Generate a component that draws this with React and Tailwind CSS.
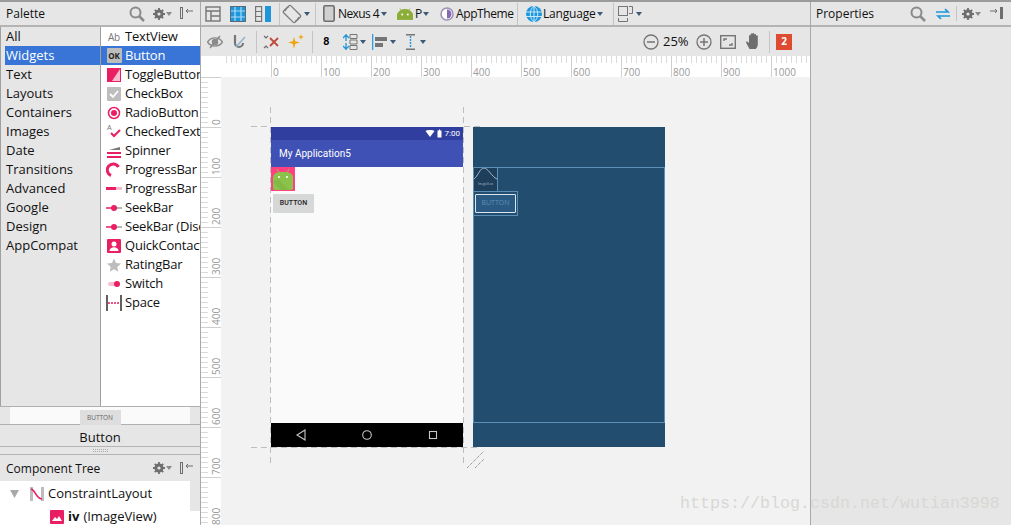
import React from "react";

const G = "#6e6e6e";
const P = "#e91e63";

const Caret = ({ c = "#3c5a78" }) => (
  <svg width="6" height="4" viewBox="0 0 6 4" className="shrink-0"><path d="M0 0h6L3 4z" fill={c} /></svg>
);
const Search = () => (
  <svg width="16" height="16" viewBox="0 0 16 16" fill="none" stroke="#8a8a8a" strokeWidth="2"><circle cx="6.5" cy="6.5" r="5" /><path d="M10 10l5 5" strokeWidth="2.5" /></svg>
);
const Gear = () => (
  <svg width="12" height="12" viewBox="0 0 12 12"><circle cx="6" cy="6" r="3.2" fill="none" stroke={G} strokeWidth="2.6" /><path d="M6 0v12M0 6h12M1.8 1.8l8.4 8.4M10.2 1.8l-8.4 8.4" stroke={G} strokeWidth="1.8" /><circle cx="6" cy="6" r="1.6" fill="#e6e6e6" /></svg>
);
const GearMenu = () => (
  <span className="flex items-center gap-[1px]"><Gear /><Caret c="#8a8a8a" /></span>
);
const PinLeft = () => (
  <svg width="13" height="13" viewBox="0 0 13 13" fill="none"><rect x="0.5" y="0.5" width="2" height="11" stroke={G} /><path d="M13 4H6M8 2L6 4l2 2" stroke={G} /></svg>
);
const PinRight = () => (
  <svg width="13" height="13" viewBox="0 0 13 13" fill="none"><rect x="10.5" y="0.5" width="2" height="11" fill={G} stroke={G} /><path d="M0 4h7M5 2l2 2-2 2" stroke={G} /></svg>
);

const Pink = ({ d }) => (
  <svg width="16" height="16" viewBox="0 0 16 16">{d}</svg>
);
const icons = {
  text: <span className="flex w-4 justify-center text-[10px] leading-4 text-[#777]">Ab</span>,
  ok: <span className="flex h-[15px] w-[15px] items-center justify-center rounded-[1px] bg-[#bdbdbd] text-[8px] font-bold text-[#222]">OK</span>,
  toggle: <Pink d={<><rect x="1" y="1" width="14" height="14" fill={P} /><path d="M14 2v12H6z" fill="#f8bbd0" /></>} />,
  check: <Pink d={<><rect x="1" y="1" width="14" height="14" rx="1" fill="#bdbdbd" /><path d="M4 8l3 3 5-6" stroke="#fff" strokeWidth="1.8" fill="none" /></>} />,
  radio: <Pink d={<><circle cx="8" cy="8" r="5.500" fill="none" stroke={P} strokeWidth="1.500" /><circle cx="8" cy="8" r="3" fill={P} /></>} />,
  checked: <Pink d={<><path d="M5 9l3 3 6-6" stroke={P} strokeWidth="2" fill="none" /><text x="1" y="6" fontSize="7" fill="#777" fontFamily="Liberation Sans">A</text></>} />,
  spinner: <Pink d={<><path d="M1 10h14M1 14h14" stroke={P} strokeWidth="2" /><path d="M3 7l11-3v3z" fill="#777" /></>} />,
  progress: <Pink d={<path d="M12.500 5A6 6 0 1 0 5 13.500" stroke={P} strokeWidth="3" fill="none" />} />,
  bar: <Pink d={<><rect x="0" y="6" width="10" height="3" fill={P} /><rect x="10" y="6" width="6" height="3" fill="#f8bbd0" /></>} />,
  seek: <Pink d={<><path d="M0 8h9" stroke={P} strokeWidth="1.500" /><path d="M9 8h7" stroke="#9e9e9e" strokeWidth="1.500" /><circle cx="8" cy="8" r="3" fill={P} /></>} />,
  contact: <Pink d={<><rect x="1" y="1" width="14" height="14" rx="1" fill={P} /><circle cx="8" cy="6" r="2.500" fill="#fff" /><path d="M3.500 13c0-5 9-5 9 0z" fill="#fff" /></>} />,
  star: <Pink d={<path d="M8 1.500l2 4.600 5 .5-3.700 3.300 1 4.900L8 12.300l-4.300 2.500 1-4.900L1 6.600l5-.5z" fill="#bdbdbd" />} />,
  sw: <Pink d={<><rect x="2" y="6" width="10" height="4" rx="2" fill="#f8bbd0" /><circle cx="11" cy="8" r="3" fill={P} /></>} />,
  space: <Pink d={<><path d="M1 0v16M15 0v16" stroke="#616161" strokeWidth="2" /><path d="M2 8h12" stroke={P} strokeWidth="1.300" strokeDasharray="2 1" /></>} />,
};

const categories = ["All", "Widgets", "Text", "Layouts", "Containers", "Images", "Date", "Transitions", "Advanced", "Google", "Design", "AppCompat"];
const widgets = [
  ["text", "TextView"], ["ok", "Button"], ["toggle", "ToggleButton"], ["check", "CheckBox"], ["radio", "RadioButton"],
  ["checked", "CheckedTextView"], ["spinner", "Spinner"], ["progress", "ProgressBar"], ["bar", "ProgressBar"],
  ["seek", "SeekBar"], ["seek", "SeekBar (Discrete)"], ["contact", "QuickContactBadge"], ["star", "RatingBar"], ["sw", "Switch"], ["space", "Space"],
];

function Palette() {
  return (
    <aside className="flex h-full w-[201px] shrink-0 flex-col border-r border-[#a9a9a9] bg-[#e6e6e6]">
      <div className="flex h-[25px] shrink-0 items-center justify-between border-b-2 border-[#b4b4b4] pl-[6px] pr-[7px]">
        <span className="text-[12px]">Palette</span>
        <span className="flex items-center gap-[8px]"><Search /><GearMenu /><PinLeft /></span>
      </div>
      <div className="flex min-h-0 flex-1">
        <ul className="w-[101px] shrink-0 border-x border-[#a0a0a0] pl-[4px]">
          {categories.map((c) => (
            <li key={c} className={"flex h-[19px] items-center pl-[1px] text-[13px] " + (c === "Widgets" ? "bg-[#3875d7] text-white" : "")}>{c}</li>
          ))}
        </ul>
        <ul className="min-w-0 flex-1 overflow-hidden bg-white">
          {widgets.map(([i, n], idx) => (
            <li key={idx} className={"flex h-[19px] items-center gap-[3px] whitespace-nowrap pl-[5px] text-[13px] tracking-[-0.2px] " + (n === "Button" ? "bg-[#3875d7] text-white" : "")}>
              <span className="flex w-[16px] shrink-0 items-center justify-center">{icons[i]}</span>
              {n}
            </li>
          ))}
        </ul>
      </div>
      <div className="flex h-[19px] shrink-0 border-y border-[#b0b0b0] px-[10px]">
        <div className="flex flex-1 justify-center bg-[#fafafa]">
          <span className="mt-[3px] flex h-[15px] w-[41px] items-center justify-center bg-[#dedede] text-[6.5px] text-[#666]">BUTTON</span>
        </div>
      </div>
      <div className="flex h-[22px] shrink-0 items-center justify-center border-b border-[#b4b4b4] pt-[5px] text-[13px]">Button</div>
      <div className="flex h-[8px] shrink-0 items-center justify-center border-b border-[#b4b4b4]">
        <span className="h-[3px] w-[15px] border-y border-dotted border-[#aaa]" />
      </div>
      <div className="flex h-[26px] shrink-0 items-center justify-between pl-[6px] pr-[7px]">
        <span className="pt-[2px] text-[12px]">Component Tree</span>
        <span className="flex items-center gap-[8px]"><GearMenu /><PinLeft /></span>
      </div>
      <div className="flex h-[44px] shrink-0 bg-white">
        <div className="min-w-0 flex-1 pt-[1px] text-[13px]">
          <div className="flex h-[23px] items-center pl-[10px]">
            <svg width="9" height="8" viewBox="0 0 9 8"><path d="M0 0h9L4.500 8z" fill="#a8a8a8" /></svg>
            <svg width="14" height="14" viewBox="0 0 14 14" className="ml-[11px]"><rect width="14" height="14" fill="#bdbdbd" /><rect x="3" width="8" height="14" fill="#fff" /><path d="M1 2c5 1 4 9 11 10" stroke={P} strokeWidth="1.600" fill="none" /></svg>
            <span className="ml-[4px]">ConstraintLayout</span>
          </div>
          <div className="flex h-[23px] items-center pl-[50px]">
            <svg width="14" height="14" viewBox="0 0 14 14"><rect width="14" height="14" rx="1" fill={P} /><path d="M2 11l3-4 2 2 2-3 3 5z" fill="#fff" /></svg>
            <b className="ml-[4px]">iv</b>
            <span className="ml-[4px]">(ImageView)</span>
          </div>
        </div>
        <div className="h-[30px] w-[10px] shrink-0 bg-[#e6e6e6]" />
      </div>
    </aside>
  );
}

const Sep = ({ className }) => <span className={"h-[22px] w-px shrink-0 bg-[#c4c4c4] " + className} />;

function TopBar() {
  return (
    <div className="flex h-[25px] shrink-0 items-center border-b-2 border-[#b4b4b4] pl-[4px] text-[12px]">
      <svg width="16" height="16" viewBox="0 0 16 16" fill="none" stroke="#757575" strokeWidth="1.400"><rect x="1" y="1" width="14" height="14" /><path d="M1 5h14M6 5v10M6 10h9" /></svg>
      <svg width="16" height="16" viewBox="0 0 16 16" className="ml-[9px]"><rect width="16" height="16" fill="#1e96dc" /><path d="M5 1v14M11 1v14M1 5h14M1 11h14" stroke="#a8dcf7" strokeWidth="1.200" /><rect x=".5" y=".5" width="15" height="15" fill="none" stroke="#5a6a75" /></svg>
      <svg width="16" height="16" viewBox="0 0 16 16" className="ml-[9px]" fill="none" stroke="#757575" strokeWidth="1.200"><rect x=".6" y=".6" width="6" height="14.800" /><path d="M.6 5.500h6M.6 10.500h6" /><rect x="10" y="0" width="6" height="16" fill="#1e96dc" stroke="none" /></svg>
      <Sep className="ml-[8px]" />
      <svg width="20" height="20" viewBox="0 0 20 20" fill="none" stroke="#7b7b7b" strokeWidth="1.300" className="ml-[2px]"><rect x="5" y="2" width="10" height="16" rx="1.500" transform="rotate(-45 10 10)" /><path d="M3 7A8 8 0 0 1 7 2.500M17 13a8 8 0 0 1-4 4.500" /></svg>
      <span className="ml-[2px]"><Caret /></span>
      <Sep className="ml-[5px]" />
      <svg width="12" height="17" viewBox="0 0 12 17" className="ml-[7px]"><rect x=".8" y=".8" width="10.400" height="15.400" rx="1.500" fill="#d0d0d0" stroke="#6e6e6e" strokeWidth="1.600" /></svg>
      <span className="ml-[3px] w-[41px] whitespace-nowrap tracking-[-0.6px]">Nexus 4</span>
      <span className="ml-[2px]"><Caret /></span>
      <svg width="16" height="12" viewBox="0 0 17 12" className="ml-[10px]"><path d="M0 12V8.500A8.500 7.500 0 0 1 17 8.500V12zM3 0l3 4M14 0l-3 4" fill="#8cae38" stroke="#8cae38" strokeWidth=".8" /><circle cx="5.500" cy="6.500" r="1" fill="#fff" /><circle cx="11.500" cy="6.500" r="1" fill="#fff" /></svg>
      <span className="ml-[2px] w-[7px]">P</span>
      <span className="ml-[1px]"><Caret /></span>
      <svg width="14" height="14" viewBox="0 0 14 14" className="ml-[11px]"><circle cx="7" cy="7" r="6" fill="#fff" stroke="#9a8fb5" strokeWidth="1.500" /><path d="M7 2.500a4.500 4.500 0 0 1 0 9z" fill="#8569b5" /></svg>
      <span className="ml-[2px] w-[57px] whitespace-nowrap tracking-[-0.4px]">AppTheme</span>
      <Sep className="ml-[4px]" />
      <svg width="16" height="16" viewBox="0 0 16 16" fill="#1e96dc" className="ml-[8px]"><circle cx="8" cy="8" r="8" /><path d="M0 6h16M0 10.500h16M8 0v16M8 0C3 4 3 12 8 16M8 0c5 4 5 12 0 16" stroke="#d6effc" strokeWidth=".9" fill="none" /></svg>
      <span className="ml-[1px] w-[52px] whitespace-nowrap tracking-[-0.2px]">Language</span>
      <span className="ml-[2px]"><Caret /></span>
      <Sep className="ml-[10px]" />
      <svg width="16" height="16" viewBox="0 0 16 16" fill="none" stroke="#757575" strokeWidth="1" className="ml-[4px]"><rect x=".5" y=".5" width="9" height="9" /><path d="M11 .5h3.500v7H11M.5 12v3.500h9V12" /></svg>
      <span className="ml-[2px]"><Caret /></span>
    </div>
  );
}

function SecondBar() {
  return (
    <div className="flex h-[29px] shrink-0 items-center pl-[6px] pr-[18px]">
      <svg width="16" height="14" viewBox="0 0 16 14" fill="none" stroke="#8a8a8a" strokeWidth="1.400"><path d="M.5 7C4 1.500 12 1.500 15.500 7 12 12.500 4 12.500.5 7z" /><circle cx="8" cy="7" r="2.500" fill="#8a8a8a" /><path d="M3 13L13 1" /></svg>
      <svg width="13" height="14" viewBox="0 0 13 14" className="ml-[10px]"><path d="M2 0v8a4 4 0 0 0 8 0" fill="none" stroke="#777" strokeWidth="2.200" /><path d="M3 12L12 2" stroke="#8fb7cf" strokeWidth="1.600" /></svg>
      <Sep className="ml-[10px]" />
      <svg width="16" height="14" viewBox="0 0 16 14" className="ml-[6px]"><path d="M7 3l8 8M15 3l-8 8" stroke="#c0493a" strokeWidth="1.800" /><path d="M1 1l2 2 2-2M1 13l2-2 2 2" stroke="#6e6e6e" strokeWidth="1.200" fill="none" /></svg>
      <svg width="16" height="15" viewBox="0 0 16 15" fill="#f0a30a" className="ml-[9px]"><path d="M6 3l1.200 4.200L12 8.500 7.200 9.800 6 15 4.800 9.800 0 8.500l4.800-1.300z" /><path d="M13 0l.7 2.300L16 3l-2.300.7L13 6l-.7-2.300L10 3l2.300-.7z" /></svg>
      <Sep className="ml-[8px]" />
      <span className="ml-[10px] w-[8px] text-[11px] font-bold leading-none text-black" style={{ fontFamily: '"DejaVu Sans Mono", monospace' }}>8</span>
      <svg width="15" height="16" viewBox="0 0 15 16" className="ml-[12px]" fill="none"><path d="M7 .5h7v4H7zM7 6h7v4H7zM7 11.500h7v4H7z" stroke="#757575" /><path d="M3 0v7M3 9v7M0 4l3-3 3 3M0 12l3 3 3-3" stroke="#1e96dc" strokeWidth="1.300" /></svg>
      <span className="ml-[2px]"><Caret /></span>
      <svg width="15" height="16" viewBox="0 0 15 16" className="ml-[6px]"><path d="M.7 0v16" stroke="#1e96dc" strokeWidth="1.200" /><rect x="3" y="3" width="12" height="4" fill="#757575" /><rect x="3" y="9" width="8" height="4" fill="#757575" /></svg>
      <span className="ml-[3px]"><Caret /></span>
      <svg width="9" height="16" viewBox="0 0 9 16" className="ml-[10px]"><path d="M0 .7h9M0 15.300h9" stroke="#757575" strokeWidth="1.400" /><path d="M4.500 2v12" stroke="#1e96dc" strokeWidth="1.400" strokeDasharray="2 1" /></svg>
      <span className="ml-[5px]"><Caret /></span>
      <div className="ml-auto flex items-center">
        <svg width="16" height="16" viewBox="0 0 16 16" fill="none" stroke="#757575" strokeWidth="1.300"><circle cx="8" cy="8" r="7" /><path d="M4 8h8" strokeWidth="1.500" /></svg>
        <span className="ml-[4px] w-[27px] text-[13px]">25%</span>
        <svg width="16" height="16" viewBox="0 0 16 16" fill="none" stroke="#757575" strokeWidth="1.300" className="ml-[6px]"><circle cx="8" cy="8" r="7" /><path d="M4 8h8M8 4v8" strokeWidth="1.500" /></svg>
        <svg width="16" height="14" viewBox="0 0 16 14" fill="none" stroke="#757575" className="ml-[8px]"><rect x=".7" y=".7" width="14.600" height="12.600" strokeWidth="1.400" /><path d="M4 6V4h3M12 8v2H9" strokeWidth="1.400" /></svg>
        <svg width="16" height="17" viewBox="0 0 16 17" fill="#6e6e6e" className="ml-[10px]"><path d="M3.500 16C2 13 0 10 0 9c1-1 2 0 3 1V3c0-1.500 1.600-1.500 1.600 0V1.500c0-1.500 1.800-1.500 1.800 0V1c0-1.500 1.800-1.500 1.800 0v1c0-1.500 1.800-1.500 1.800 0V3c0-1 1.800-1 1.800 0v8c0 2-1 4-2 5z" /></svg>
        <Sep className="ml-[7px] mr-[6px]" />
        <span className="flex h-[16px] w-[16px] items-center justify-center bg-[#dd4b30] text-[10px] font-bold text-white">2</span>
      </div>
    </div>
  );
}

const ticks = Array.from({ length: 120 }, (_, i) => i + 1);

function TopRuler() {
  return (
    <div className="relative h-[21px] shrink-0 overflow-hidden bg-white">
      <svg width="609" height="21" className="absolute left-0 top-0">
        {ticks.map((i) => {
          const x = 20 + i * 5 + 0.5;
          const major = i % 10 === 0;
          return <line key={i} x1={x} x2={x} y1={0} y2={major ? 21 : 7} stroke={major ? "#cfcfcf" : "#dadada"} />;
        })}
      </svg>
      {[0, 100, 200, 300, 400, 500, 600, 700, 800, 900, 1000].map((n, i) => (
        <span key={n} className="absolute top-[10px] text-[10px] leading-3 text-[#999]" style={{ left: 72 + i * 50 }}>{n}</span>
      ))}
    </div>
  );
}

function LeftRuler() {
  return (
    <div className="relative w-[20px] shrink-0 overflow-hidden bg-white">
      <svg width="20" height="448" className="absolute left-0 top-0">
        {Array.from({ length: 90 }, (_, i) => i).map((i) => {
          const y = i * 5 + 0.5;
          const major = i % 10 === 0;
          return <line key={i} x1={0} x2={major ? 20 : 7} y1={y} y2={y} stroke={major ? "#cfcfcf" : "#dadada"} />;
        })}
      </svg>
      {[0, 100, 200, 300, 400, 500, 600, 700, 800].map((n, i) => (
        <span key={n} className="absolute left-0 flex h-[12px] w-[30px] origin-center -rotate-90 items-center justify-start text-[10px] leading-3 text-[#999]" style={{ top: 50 * (i + 1) - 22 }}>
          <span className="w-full pl-[1px]">{n}</span>
        </span>
      ))}
    </div>
  );
}

function Phone() {
  return (
    <div className="absolute left-[50px] top-[50px] flex h-[320px] w-[192px] flex-col bg-[#fafafa]">
      <div className="flex h-[13px] shrink-0 items-center justify-end bg-[#303f9f] pr-[3px] text-[8px] text-white" style={{ fontFamily: "Roboto, sans-serif" }}>
        <svg width="10" height="7" viewBox="0 0 9 7"><path d="M0 1C2.500-.4 6.500-.4 9 1L4.500 7z" fill="#fff" /></svg>
        <svg width="5" height="9" viewBox="0 0 5 8" className="ml-[2px]"><path d="M1 1h1V0h1v1h1.500v7H.5V1z" fill="#fff" /></svg>
        <span className="ml-[3px]">7:00</span>
      </div>
      <div className="flex h-[27px] shrink-0 items-center bg-[#3f51b5] pl-[8px] text-[10px] text-white" style={{ fontFamily: "Roboto, sans-serif" }}>My Application5</div>
      <div className="flex h-[24px] w-[24px] shrink-0 items-end justify-center bg-[#ff4081] pb-[1px]">
        <svg width="20" height="21" viewBox="0 0 20 21"><path d="M0 19V9C0 4 4 3 10 3s10 1 10 6v10a2 2 0 0 1-2 2H2a2 2 0 0 1-2-2z" fill="#8bc34a" /><path d="M0 13l8 8h8L5 10z" fill="#7cb342" opacity=".6" /><path d="M4 0l2 4M16 0l-2 4" stroke="#8bc34a" /><circle cx="6" cy="8" r="1" fill="#fff" /><circle cx="14" cy="8" r="1" fill="#fff" /></svg>
      </div>
      <div className="ml-[2px] mt-[3px] flex h-[19px] w-[41px] shrink-0 items-center justify-center rounded-[1px] bg-[#d6d7d7] text-[7px] font-medium text-[#222]" style={{ fontFamily: "Roboto, sans-serif" }}>BUTTON</div>
      <div className="flex-1" />
      <div className="flex h-[24px] shrink-0 items-center bg-black">
        <svg width="192" height="24" viewBox="0 0 192 24" fill="none" stroke="#c8c8c8" strokeWidth="1.100"><path d="M34 7v10l-8-5z" /><circle cx="96" cy="12" r="4.300" /><rect x="158.500" y="8.500" width="7" height="7" /></svg>
      </div>
    </div>
  );
}

function Blueprint() {
  return (
    <div className="absolute left-[252px] top-[50px] h-[320px] w-[192px] bg-[#224d6f]">
      <div className="absolute left-0 right-0 top-[40px] h-[256px] border border-[#5b8fb8]" />
      <div className="absolute left-0 top-[40px] flex h-[25px] w-[25px] items-end justify-center border border-[#5b8fb8] bg-[#1e3f5c] pb-[5px] text-[3px] text-[#a8bccc]">
        <svg width="24" height="12" viewBox="0 0 24 12" fill="none" stroke="#c9d6e0" strokeWidth=".8" className="absolute left-0 top-0"><path d="M0 11C4 8 6 0 10 0s8 9 13 11" /></svg>
        ImageView
      </div>
      <div className="absolute left-0 top-[64px] flex h-[25px] w-[45px] items-center justify-center border border-[#5b8fb8]">
        <div className="flex h-[19px] w-[41px] items-center justify-center rounded-[1px] border border-[#dfe7ee] bg-[#2a5a82] text-[7px] text-[#5e8fb8]">BUTTON</div>
      </div>
    </div>
  );
}

function Guides() {
  return (
    <>
      <svg width="270" height="400" className="absolute left-0 top-0" fill="none" stroke="#bdbdbd" strokeDasharray="6 4">
        <path d="M30 49.500H50M243 49.500H259M30 370.500H259M49.500 30V388M242.500 30V388" />
      </svg>
      <svg width="18" height="18" viewBox="0 0 18 18" className="absolute left-[246px] top-[374px]" stroke="#777" strokeDasharray="1 1" fill="none"><path d="M0 17L17 0M8 17L17 8" /></svg>
    </>
  );
}

function Center() {
  return (
    <main className="flex h-full min-w-0 flex-1 flex-col border-r border-[#a9a9a9] bg-[#e6e6e6]">
      <TopBar />
      <SecondBar />
      <TopRuler />
      <div className="flex min-h-0 flex-1">
        <LeftRuler />
        <div className="relative min-w-0 flex-1 overflow-hidden bg-[#f2f2f2]">
          <Guides />
          <Phone />
          <Blueprint />
        </div>
      </div>
    </main>
  );
}

function Properties() {
  return (
    <aside className="h-full w-[200px] shrink-0 bg-[#e6e6e6]">
      <div className="flex h-[25px] items-center border-b-2 border-[#b4b4b4] pl-[5px] pr-[8px]">
        <span className="text-[12px]">Properties</span>
        <span className="ml-auto flex items-center">
          <Search />
          <svg width="16" height="12" viewBox="0 0 16 12" fill="none" stroke="#1e96dc" strokeWidth="1.700" className="ml-[9px]"><path d="M1 4h12l-3-3M15 8H3l3 3" /></svg>
          <span className="mx-[5px] h-[15px] w-px bg-[#c4c4c4]" />
          <GearMenu />
          <span className="ml-[9px]"><PinRight /></span>
        </span>
      </div>
    </aside>
  );
}

export default function App() {
  return (
    <div className="relative h-[525px] w-[1011px] overflow-hidden border-t-2 border-[#9b9b9b] bg-[#e6e6e6] text-[#111]" style={{ fontFamily: '"Open Sans", sans-serif' }}>
      <div className="flex h-full">
        <Palette />
        <Center />
        <Properties />
      </div>
      <span className="pointer-events-none absolute left-[680px] top-[492px] whitespace-nowrap text-[16.67px] leading-5 text-[#d8d8d4]" style={{ fontFamily: '"Liberation Mono", monospace' }}>https://blog.csdn.net/wutian3998</span>
    </div>
  );
}
